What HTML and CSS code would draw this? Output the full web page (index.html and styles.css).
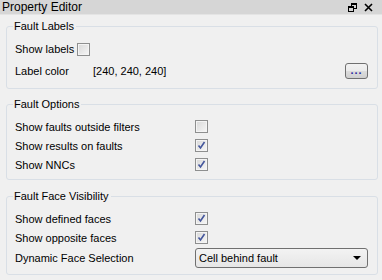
FILE: index.html
```html
<!DOCTYPE html>
<html lang="en">
<head>
  <meta charset="UTF-8">
  <title>Property Editor</title>
  <link rel="stylesheet" href="styles.css">
</head>
<body>
  <div class="titlebar">
    <div class="title">Property Editor</div>
    <div class="title-buttons">
      <svg class="float-icon" width="9" height="9" viewBox="0 0 9 9">
        <rect x="3.5" y="0.5" width="5" height="5" fill="none" stroke="#000"/>
        <rect x="3" y="0" width="6" height="2" fill="#000"/>
        <rect x="0" y="3" width="6" height="6" fill="#d6d6d6"/>
        <rect x="0.5" y="3.5" width="5" height="5" fill="none" stroke="#000"/>
        <rect x="0" y="3" width="6" height="2" fill="#000"/>
      </svg>
      <svg class="close-icon" width="9" height="9" viewBox="0 0 9 9">
        <path d="M1 1L8 8M8 1L1 8" stroke="#000" stroke-width="1.6"/>
      </svg>
    </div>
  </div>

  <section class="group group-labels">
    <div class="group-title">Fault Labels</div>
    <div class="rows">
      <div class="row row-first">
        <span class="label-inline">Show labels</span>
        <span class="check"></span>
      </div>
      <div class="row row-color">
        <span class="label-short">Label color</span>
        <span class="color-value">[240, 240, 240]</span>
        <button class="dots">...</button>
      </div>
    </div>
  </section>

  <section class="group group-options">
    <div class="group-title">Fault Options</div>
    <div class="rows">
      <div class="row">
        <span class="label">Show faults outside filters</span>
        <span class="check"></span>
      </div>
      <div class="row">
        <span class="label">Show results on faults</span>
        <span class="check"><svg width="11" height="11" viewBox="0 0 11 11"><path d="M2.5 5.5L4.5 8L8.5 2" fill="none" stroke="#44569c" stroke-width="1.6"/></svg></span>
      </div>
      <div class="row">
        <span class="label">Show NNCs</span>
        <span class="check"><svg width="11" height="11" viewBox="0 0 11 11"><path d="M2.5 5.5L4.5 8L8.5 2" fill="none" stroke="#44569c" stroke-width="1.6"/></svg></span>
      </div>
    </div>
  </section>

  <section class="group group-faces">
    <div class="group-title">Fault Face Visibility</div>
    <div class="rows">
      <div class="row">
        <span class="label">Show defined faces</span>
        <span class="check"><svg width="11" height="11" viewBox="0 0 11 11"><path d="M2.5 5.5L4.5 8L8.5 2" fill="none" stroke="#44569c" stroke-width="1.6"/></svg></span>
      </div>
      <div class="row">
        <span class="label">Show opposite faces</span>
        <span class="check"><svg width="11" height="11" viewBox="0 0 11 11"><path d="M2.5 5.5L4.5 8L8.5 2" fill="none" stroke="#44569c" stroke-width="1.6"/></svg></span>
      </div>
      <div class="row row-combo">
        <span class="label">Dynamic Face Selection</span>
        <div class="combo">
          <span>Cell behind fault</span>
          <span class="arrow"></span>
        </div>
      </div>
    </div>
  </section>
</body>
</html>
```

FILE: styles.css
```css
body {
  margin: 0;
  background: #f0f0f0;
  font-family: "Liberation Sans", Arial, sans-serif;
  font-size: 11px;
  color: #000;
}

.titlebar {
  display: flex;
  justify-content: space-between;
  align-items: center;
  height: 14px;
  background: #d6d6d6;
  border-bottom: 1px solid #e4e4e4;
  padding: 0 9px 0 2px;
}

.title {
  font-size: 12px;
}

.title-buttons {
  display: flex;
  gap: 7px;
  align-items: center;
}

.group {
  margin: 15px 4px 0 6px;
  padding: 0 0 5px 8px;
  border: 1px solid #d9dfe6;
  border-radius: 3px;
}

.group-labels {
  margin-top: 11px;
}

.group-faces {
  margin-top: 16px;
  padding-bottom: 6px;
}

.group-title {
  width: fit-content;
  margin: -8px 0 0 -2px;
  padding: 0 2px 0 1px;
  background: #f0f0f0;
  line-height: 14px;
}

.rows {
  padding-top: 6px;
}

.row {
  display: flex;
  align-items: center;
  height: 19px;
}

.row-first {
  height: 20px;
}

.row-color {
  height: 24px;
}

.row-combo {
  height: 21px;
}

.label {
  width: 180px;
}

.label-inline {
  width: 62px;
}

.label-short {
  width: 78px;
}

.color-value {
  flex: 1;
}

.check {
  display: inline-flex;
  align-items: center;
  justify-content: center;
  width: 11px;
  height: 11px;
  border: 1px solid #8e8f8f;
  background: linear-gradient(135deg, #d8d8d8, #f7f7f7);
  box-shadow: inset 0 0 0 1px #f4f4f4;
}

.dots {
  width: 23px;
  height: 16px;
  margin-right: 9px;
  padding: 0 0 3px;
  border: 1px solid #707070;
  border-radius: 3px;
  background: linear-gradient(#f2f2f2 0%, #ebebeb 50%, #dddddd 50%, #cfcfcf 100%);
  font-family: "Liberation Sans", Arial, sans-serif;
  font-size: 11px;
  font-weight: bold;
  color: #2a2aa0;
  line-height: 10px;
  letter-spacing: 1px;
}

.combo {
  display: flex;
  justify-content: space-between;
  align-items: center;
  box-sizing: border-box;
  width: 173px;
  height: 20px;
  padding: 0 6px 0 3px;
  border: 1px solid #707070;
  border-radius: 3px;
  background: linear-gradient(#f3f3f3, #e6e6e6);
}

.arrow {
  width: 0;
  height: 0;
  border-left: 4px solid transparent;
  border-right: 4px solid transparent;
  border-top: 4px solid #000;
}
```
